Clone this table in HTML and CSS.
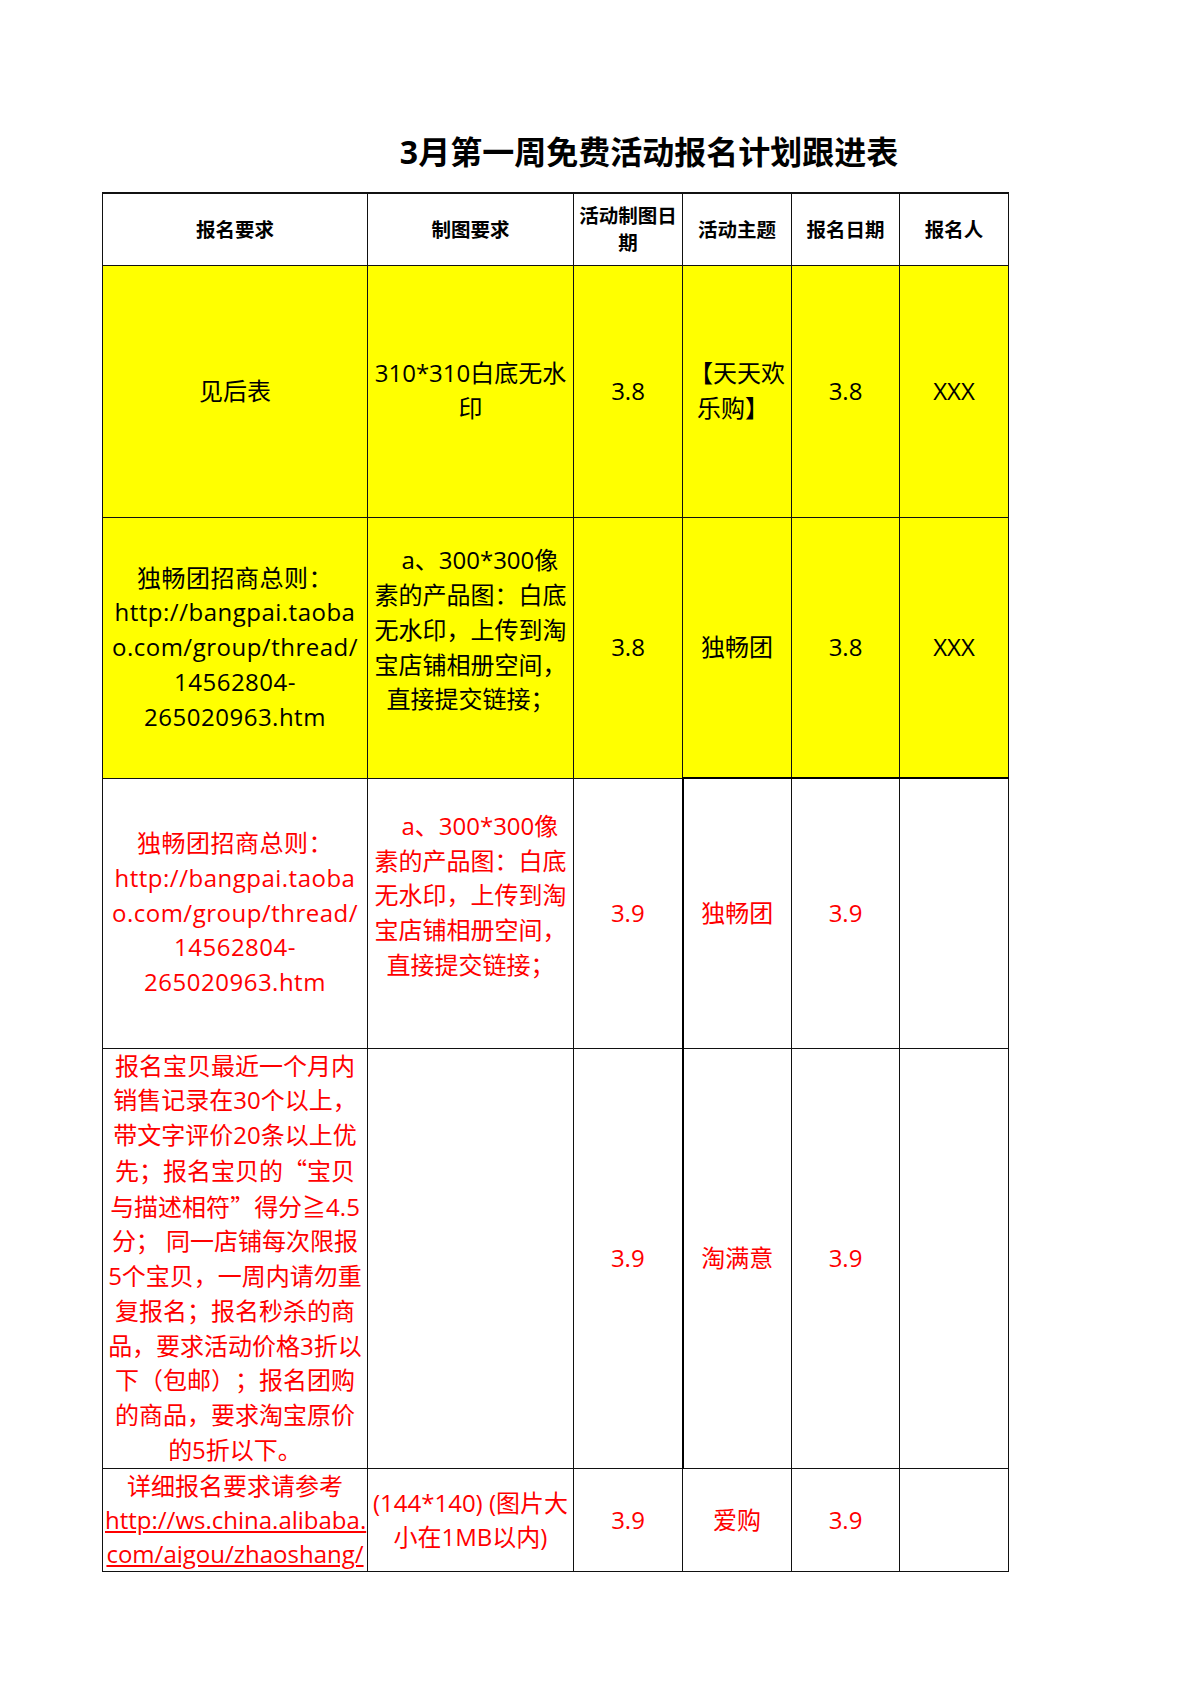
FILE: index.html
```html
<!DOCTYPE html>
<html lang="zh-CN">
<head>
<meta charset="utf-8">
<title>3月第一周免费活动报名计划跟进表</title>
<link rel="stylesheet" href="styles.css">
</head>
<body>
<div class="page">
  <h1 class="title">3月第一周免费活动报名计划跟进表</h1>
  <table class="sheet">
    <colgroup>
      <col class="c1"><col class="c2"><col class="c3"><col class="c4"><col class="c5"><col class="c6">
    </colgroup>
    <thead>
      <tr class="r-head">
        <th>报名要求</th>
        <th>制图要求</th>
        <th>活动制图日<br>期</th>
        <th>活动主题</th>
        <th>报名日期</th>
        <th>报名人</th>
      </tr>
    </thead>
    <tbody>
      <tr class="r1 yellow">
        <td>见后表</td>
        <td>310*310白底无水<br>印</td>
        <td>3.8</td>
        <td class="left">【天天欢<br>乐购】</td>
        <td>3.8</td>
        <td>XXX</td>
      </tr>
      <tr class="r2 yellow">
        <td class="url">独畅团招商总则：<br>http://bangpai.taoba<br>o.com/group/thread/<br>14562804-<br>265020963.htm</td>
        <td>&nbsp;&nbsp;&nbsp;a、300*300像<br>素的产品图：白底<br>无水印，上传到淘<br>宝店铺相册空间，<br>直接提交链接；<br>&nbsp;</td>
        <td>3.8</td>
        <td>独畅团</td>
        <td>3.8</td>
        <td>XXX</td>
      </tr>
      <tr class="r3 red">
        <td class="url">独畅团招商总则：<br>http://bangpai.taoba<br>o.com/group/thread/<br>14562804-<br>265020963.htm</td>
        <td>&nbsp;&nbsp;&nbsp;a、300*300像<br>素的产品图：白底<br>无水印，上传到淘<br>宝店铺相册空间，<br>直接提交链接；<br>&nbsp;</td>
        <td>3.9</td>
        <td class="thick-top thick-left">独畅团</td>
        <td class="thick-top">3.9</td>
        <td class="thick-top"></td>
      </tr>
      <tr class="r4 red">
        <td>报名宝贝最近一个月内<br>销售记录在30个以上，<br>带文字评价20条以上优<br>先；报名宝贝的<span class="cjk">“</span>宝贝<br>与描述相符<span class="cjk">”</span>得分≧4.5<br>分； 同一店铺每次限报<br>5个宝贝，一周内请勿重<br>复报名；报名秒杀的商<br>品，要求活动价格3折以<br>下（包邮）；报名团购<br>的商品，要求淘宝原价<br>的5折以下。</td>
        <td></td>
        <td>3.9</td>
        <td class="thick-left">淘满意</td>
        <td>3.9</td>
        <td></td>
      </tr>
      <tr class="r5 red">
        <td>详细报名要求请参考<br><span class="link">http://ws.china.alibaba.</span><br><span class="link">com/aigou/zhaoshang/</span></td>
        <td>(144*140) (图片大<br>小在1MB以内)</td>
        <td>3.9</td>
        <td>爱购</td>
        <td>3.9</td>
        <td></td>
      </tr>
    </tbody>
  </table>
</div>
</body>
</html>
```

FILE: styles.css
```css
html, body {
  margin: 0;
  padding: 0;
  background: #ffffff;
}

body {
  font-family: "Open Sans", "Noto Sans CJK SC", sans-serif;
  color: #000000;
  text-spacing-trim: space-all;
}

.page {
  padding: 128px 0 0 102px;
}

.title {
  width: 1094px;
  margin: 0 0 16px 0;
  text-align: center;
  font-size: 32px;
  font-weight: 700;
  line-height: 48px;
  white-space: nowrap;
}

.sheet {
  border-collapse: collapse;
  table-layout: fixed;
  width: 907px;
}

.c1 { width: 265px; }
.c2 { width: 206px; }
.c3 { width: 109px; }
.c4 { width: 109px; }
.c5 { width: 108px; }
.c6 { width: 109px; }

.sheet th,
.sheet td {
  border: 1px solid #111111;
  padding: 0 2px;
  text-align: center;
  vertical-align: middle;
  white-space: nowrap;
  overflow: visible;
  text-spacing-trim: space-all;
}

.sheet th {
  font-size: 19.5px;
  font-weight: 700;
  line-height: 27px;
}

.sheet thead th {
  border-top: 2px solid #111111;
}

.sheet td {
  font-size: 24px;
  line-height: 34.75px;
}

.sheet td.url {
  letter-spacing: 0.5px;
}

.cjk {
  font-family: "Noto Sans CJK SC", sans-serif;
}

.r-head { height: 72px; }
.r1 { height: 252px; }
.r2 { height: 261px; }
.r3 { height: 270px; }
.r4 { height: 419px; }
.r5 { height: 103px; }

.r5 td { line-height: 34px; padding-top: 0; padding-bottom: 0; }

.yellow td { background: #ffff00; color: #000000; }
.red td { background: #ffffff; color: #ff0000; }

.sheet td.left {
  text-align: left;
  padding-left: 14px;
  text-indent: -8px;
}

.sheet td.thick-top { border-top: 2px solid #000000; }
.sheet td.thick-left { border-left: 2px solid #000000; }

.link { text-decoration: underline; }
```
